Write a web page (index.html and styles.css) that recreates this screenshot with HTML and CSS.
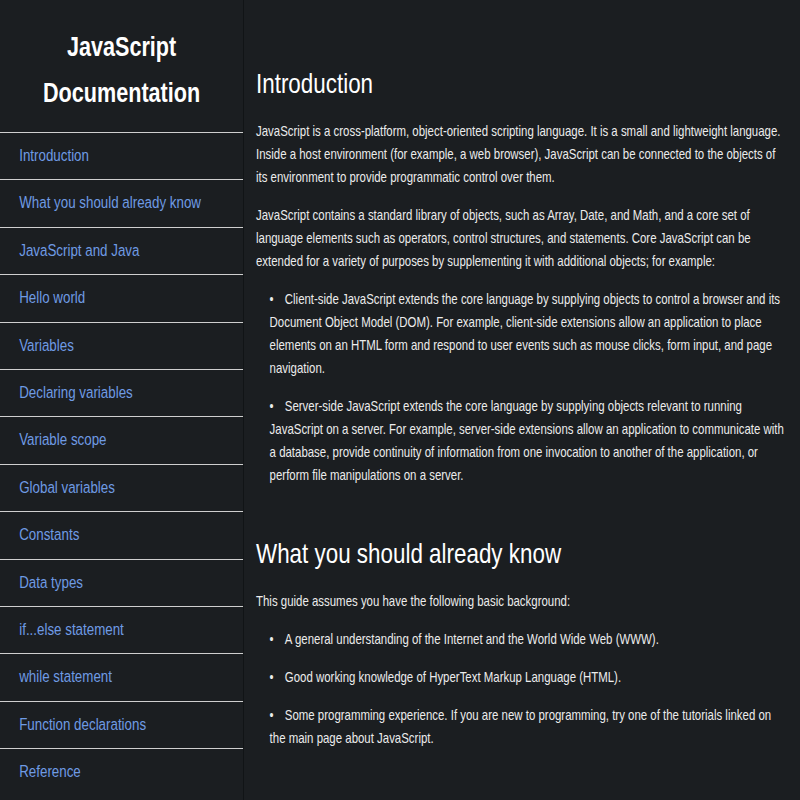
FILE: index.html
```html
<!DOCTYPE html>
<html lang="en">
<head>
  <meta charset="UTF-8">
  <meta name="viewport" content="width=device-width, initial-scale=1.0">
  <title>JavaScript Documentation</title>
  <link rel="stylesheet" href="styles.css">
</head>
<body>

  <div class="page">
    <nav id="navbar">
      <header class="nav-title">JavaScript Documentation</header>
      <a class="nav-link" href="#Introduction">Introduction</a>
      <a class="nav-link" href="#What_you_should_already_know">What you should already know</a>
      <a class="nav-link" href="#JavaScript_and_Java">JavaScript and Java</a>
      <a class="nav-link" href="#Hello_world">Hello world</a>
      <a class="nav-link" href="#Variables">Variables</a>
      <a class="nav-link" href="#Declaring_variables">Declaring variables</a>
      <a class="nav-link" href="#Variable_scope">Variable scope</a>
      <a class="nav-link" href="#Global_variables">Global variables</a>
      <a class="nav-link" href="#Constants">Constants</a>
      <a class="nav-link" href="#Data_types">Data types</a>
      <a class="nav-link" href="#if...else_statement">if...else statement</a>
      <a class="nav-link" href="#while_statement">while statement</a>
      <a class="nav-link" href="#Function_declarations">Function declarations</a>
      <a class="nav-link" href="#Reference">Reference</a>
    </nav>

    <main id="main-doc">
      <section class="main-section" id="Introduction">
        <header>Introduction</header>
        <p>JavaScript is a cross-platform, object-oriented scripting language. It is a small and lightweight language. Inside a host environment (for example, a web browser), JavaScript can be connected to the objects of its environment to provide programmatic control over them.</p>
        <p>JavaScript contains a standard library of objects, such as Array, Date, and Math, and a core set of language elements such as operators, control structures, and statements. Core JavaScript can be extended for a variety of purposes by supplementing it with additional objects; for example:</p>
        <ul>
          <li>Client-side JavaScript extends the core language by supplying objects to control a browser and its Document Object Model (DOM). For example, client-side extensions allow an application to place elements on an HTML form and respond to user events such as mouse clicks, form input, and page navigation.</li>
          <li>Server-side JavaScript extends the core language by supplying objects relevant to running JavaScript on a server. For example, server-side extensions allow an application to communicate with a database, provide continuity of information from one invocation to another of the application, or perform file manipulations on a server.</li>
        </ul>
      </section>

      <section class="main-section" id="What_you_should_already_know">
        <header>What you should already know</header>
        <p>This guide assumes you have the following basic background:</p>
        <ul>
          <li>A general understanding of the Internet and the World Wide Web (WWW).</li>
          <li>Good working knowledge of HyperText Markup Language (HTML).</li>
          <li>Some programming experience. If you are new to programming, try one of the tutorials linked on the main page about JavaScript.</li>
        </ul>
      </section>
    </main>
  </div>

</body>
</html>
```

FILE: styles.css
```css
body {
  font-family: 'Liberation Sans', Arial, sans-serif;
  margin: 0;
  padding: 0;
  height: 100vh;
  overflow: hidden;
  background-color: #1b1e21; /* page background */
  color: #ececec;
}

.page {
  display: flex;
  width: 1000px;
  height: 100vh;
  transform: scaleX(0.8);
  transform-origin: 0 0;
}

#navbar {
  flex: 0 0 305px;
  height: 100vh;
  border-right: 1px solid #101214;
  box-sizing: border-box;
  overflow: hidden;
}

.nav-title {
  padding: 24px 0 16px;
  font-size: 27px;
  font-weight: bold;
  line-height: 46px;
  text-align: center;
  color: #ffffff;
}

.nav-link {
  display: block;
  padding: 12px 24px;
  border-top: 1px solid #cfcfcf;
  font-size: 16.7px;
  line-height: 22.4px;
  color: #6f9be4; /* link blue */
  text-decoration: none;
}

#main-doc {
  flex: 1;
  padding: 32px 19px 0 15px;
  overflow: hidden;
}

.main-section {
  padding-top: 36px;
}

.main-section header {
  font-size: 28px;
  line-height: 32px;
  margin-bottom: 20px;
  color: #ffffff;
}

p {
  margin: 0 0 15px;
  font-size: 14.3px;
  line-height: 23px;
}

ul {
  list-style: none;
  margin: 0;
  padding: 0 0 0 17px;
}

li {
  margin-bottom: 15px;
  font-size: 14.3px;
  line-height: 23px;
}

li::before {
  content: "\2022";
  display: inline-block;
  width: 19px;
}
```
